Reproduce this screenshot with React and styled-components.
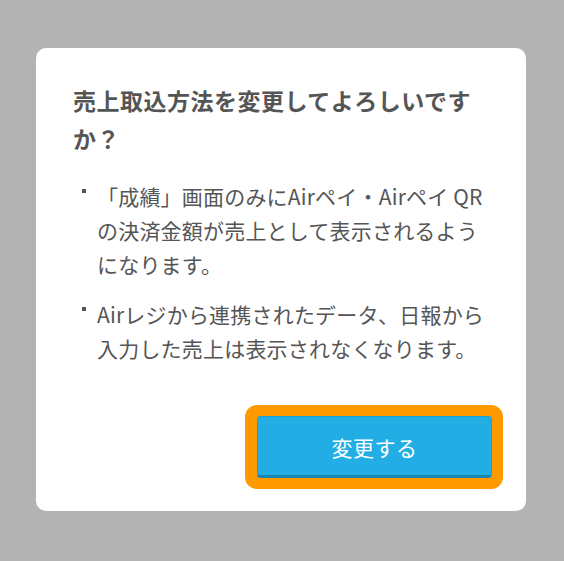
import React from 'react'
import styled, { createGlobalStyle } from 'styled-components'

const GlobalStyle = createGlobalStyle`
  html, body {
    margin: 0;
    padding: 0;
    background: #b3b3b3;
  }
  body {
    font-family: "Noto Sans CJK JP", "Noto Sans", sans-serif;
  }
`

const Overlay = styled.div`
  width: 564px;
  height: 561px;
  box-sizing: border-box;
  padding: 48px 38px 0 36px;
`

const Dialog = styled.div`
  background: #fff;
  border-radius: 10px;
  padding: 33px 36px 22px 37px;
  display: flex;
  flex-direction: column;
`

const Title = styled.h2`
  margin: 0;
  font-size: 23px;
  line-height: 38px;
  font-weight: 700;
  letter-spacing: 0.5px;
  color: #555;
`

const NoteList = styled.ul`
  list-style: none;
  margin: 22px 0 0;
  padding: 0;
  display: flex;
  flex-direction: column;
  gap: 16px;
`

const NoteItem = styled.li`
  display: flex;
  align-items: flex-start;
  font-size: 21px;
  line-height: 34px;
  letter-spacing: 0.2px;
  color: #555;
`

const Bullet = styled.span`
  flex: 0 0 24px;
  height: 34px;
  position: relative;

  &::before {
    content: '';
    position: absolute;
    left: 9px;
    top: 10px;
    width: 4px;
    height: 4px;
    background: #555;
  }
`

const NoteText = styled.span`
  flex: 1 1 auto;
`

const Footer = styled.div`
  display: flex;
  justify-content: flex-end;
  margin: 40px -13px 0 0;
`

const FocusRing = styled.div`
  padding: 11px 11px 11px 12px;
  background: #ff9900;
  border-radius: 12px;
  display: flex;
`

const PrimaryButton = styled.button`
  width: 235px;
  height: 62px;
  box-sizing: border-box;
  border: 1px solid #1e9fd2;
  border-bottom: 3px solid #1a87b3;
  border-radius: 4px;
  background: #22aee4;
  color: #fff;
  font-family: inherit;
  font-size: 21px;
  font-weight: 400;
  letter-spacing: 0.5px;
  cursor: pointer;
  padding: 2px 0 0;
`

const notes = [
  '「成績」画面のみにAirペイ・Airペイ QRの決済金額が売上として表示されるようになります。',
  'Airレジから連携されたデータ、日報から入力した売上は表示されなくなります。',
]

const App = () => (
  <>
    <GlobalStyle />
    <Overlay>
      <Dialog>
        <Title>売上取込方法を変更してよろしいですか？</Title>
        <NoteList>
          {notes.map((text) => (
            <NoteItem key={text}>
              <Bullet />
              <NoteText>{text}</NoteText>
            </NoteItem>
          ))}
        </NoteList>
        <Footer>
          <FocusRing>
            <PrimaryButton>変更する</PrimaryButton>
          </FocusRing>
        </Footer>
      </Dialog>
    </Overlay>
  </>
)

export default App
